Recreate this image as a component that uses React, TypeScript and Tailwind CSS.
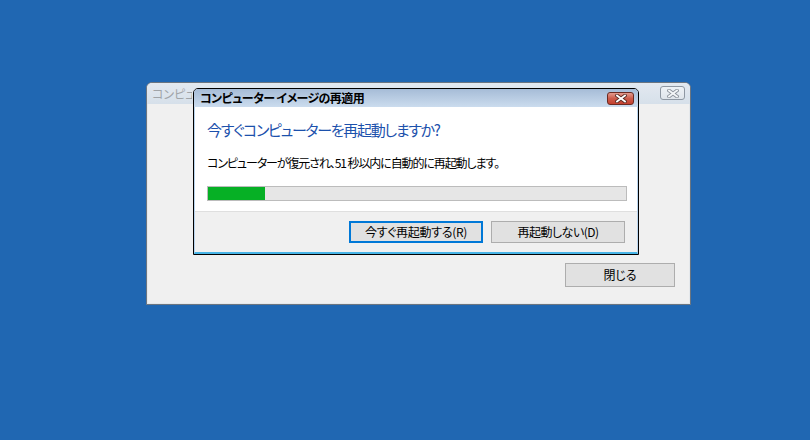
const jp = "font-['Meiryo_UI','Noto_Sans_CJK_JP',sans-serif] [font-feature-settings:'palt']";

function CloseGlyph({ color, stroke }: { color: string; stroke: string }) {
  return (
    <svg width="12" height="9" viewBox="0 0 12 9">
      <path
        d="M2 1.5 L10 7.5 M10 1.5 L2 7.5"
        stroke={stroke}
        strokeWidth="3.6"
        strokeLinecap="square"
        fill="none"
      />
      <path
        d="M2 1.5 L10 7.5 M10 1.5 L2 7.5"
        stroke={color}
        strokeWidth="1.8"
        strokeLinecap="square"
        fill="none"
      />
    </svg>
  );
}

function OuterWindow() {
  return (
    <div className="absolute left-[146px] top-[82px] w-[545px] h-[223px] flex flex-col border border-[#6b7580] rounded-t-[6px] overflow-hidden bg-[#f0f0f0]">
      <div className="h-[21px] flex items-center justify-between pl-[5px] pr-[5px] bg-gradient-to-b from-[#e3e9f0] to-[#d6e0ea]">
        <span className={`${jp} w-[40px] overflow-hidden whitespace-nowrap text-[12px] text-[#a0a4a8]`}>
          コンピューター イメージの再適用
        </span>
        <div className="w-[25px] h-[14px] flex items-center justify-center rounded-[3px] border border-[#8e97a2] bg-gradient-to-b from-[#eef2f6] to-[#dfe5eb] mt-[-1px]">
          <CloseGlyph color="#f4f6f8" stroke="#8d949c" />
        </div>
      </div>
      <div className="flex-1 flex items-end justify-end pr-[14px] pb-[16px] border-x border-b border-[#e4e8ec]">
        <button
          className={`${jp} w-[110px] h-[24px] bg-[#e1e1e1] border border-[#adadad] text-[12px] text-black`}
        >
          閉じる
        </button>
      </div>
    </div>
  );
}

function RestartDialog() {
  return (
    <div className="absolute left-[193px] top-[88px] w-[446px] h-[167px] border border-black rounded-t-[5px] overflow-hidden bg-[#f0f0f0] flex flex-col">
      <div className="h-[18px] flex items-center justify-between pl-[6px] pr-[4px] bg-gradient-to-b from-[#a6bcd7] to-[#cbdcee]">
        <span className={`${jp} text-[12px] font-bold text-black leading-none tracking-[-0.6px]`}>
          コンピューター イメージの再適用
        </span>
        <div className="w-[27px] h-[13px] flex items-center justify-center rounded-[3px] border border-[#6b2a22] bg-gradient-to-b from-[#e39a8e] via-[#cc5b4b] to-[#c4402e]">
          <CloseGlyph color="#ffffff" stroke="#5a2a24" />
        </div>
      </div>
      <div className="flex-1 flex flex-col border-x border-b-2 border-x-[#b9d4ee] border-b-[#47b4e6]">
        <div className="bg-white flex flex-col pl-[12px] pt-[13px] pb-[10px]">
          <div className={`${jp} text-[15px] leading-[20px] text-[#1c51ac] tracking-[-1.3px]`}>
            今すぐコンピューターを再起動しますか?
          </div>
          <div className={`${jp} mt-[15px] text-[12px] leading-[16px] text-black tracking-[-1.1px]`}>
            コンピューターが復元され、51 秒以内に自動的に再起動します。
          </div>
          <div className="mt-[15px] w-[420px] h-[15px] border border-[#bcbcbc] bg-[#e6e6e6]">
            <div className="h-full bg-[#06b025]" style={{ width: `${(57 / 418) * 100}%` }} />
          </div>
        </div>
        <div className="flex-1 border-t border-[#dfdfdf] flex justify-end items-start gap-[8px] pt-[9px] pr-[12px]">
          <button
            className={`${jp} w-[134px] h-[22px] bg-[#e1e1e1] border-2 border-[#0078d7] text-[12px] text-black leading-none tracking-[-0.3px]`}
          >
            今すぐ再起動する(R)
          </button>
          <button
            className={`${jp} w-[134px] h-[22px] bg-[#e1e1e1] border border-[#adadad] text-[12px] text-black leading-none tracking-[-0.5px]`}
          >
            再起動しない(D)
          </button>
        </div>
      </div>
    </div>
  );
}

export default function App() {
  return (
    <div className="relative w-[810px] h-[440px] bg-[#2067b2] overflow-hidden">
      <OuterWindow />
      <RestartDialog />
    </div>
  );
}
